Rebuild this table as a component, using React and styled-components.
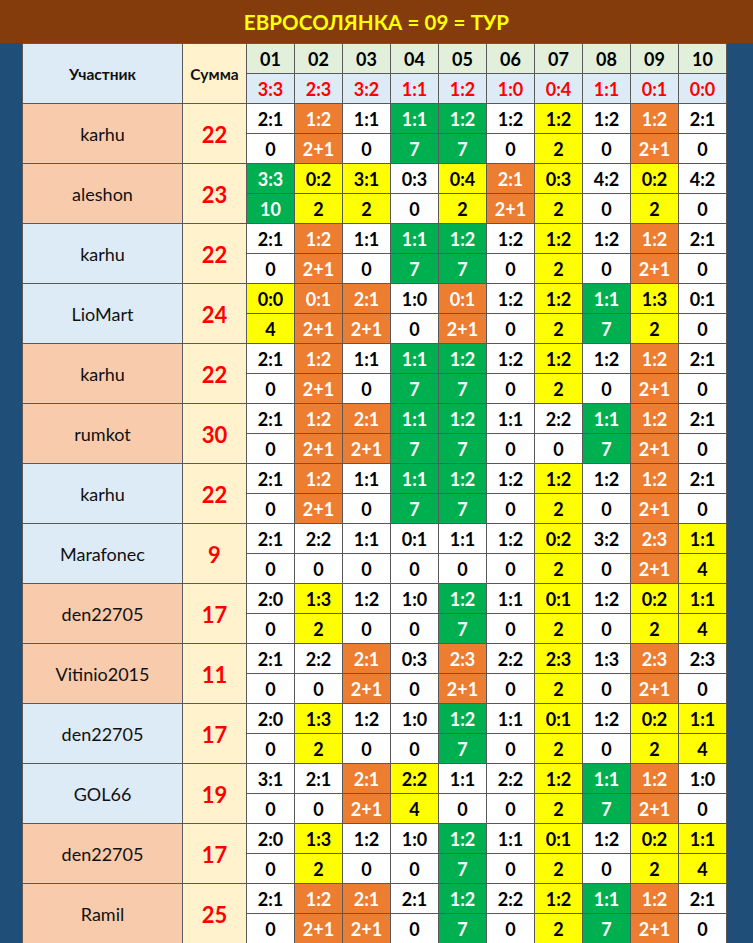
import React from "react";
import styled, { createGlobalStyle } from "styled-components";

const Global = createGlobalStyle`
  html, body { margin: 0; padding: 0; background: #1f4e79; }
  * { box-sizing: border-box; }
`;

const Page = styled.div`
  width: 753px;
  height: 943px;
  overflow: hidden;
  display: flex;
  flex-direction: column;
  background: #1f4e79;
  font-family: Lato, "Open Sans", "Liberation Sans", sans-serif;
`;

const TitleBar = styled.header`
  height: 43px;
  flex: none;
  background: #843c0c;
  display: flex;
  align-items: center;
  justify-content: center;
  color: #ffff00;
  font-weight: 700;
  font-size: 20.5px;
  letter-spacing: 0.1px;
`;

const Body = styled.div`
  display: flex;
  padding-left: 22px;
`;

const Grid = styled.div`
  display: grid;
  grid-template-columns: 159px 63px repeat(10, 47px);
  grid-auto-rows: 29px;
  gap: 1px;
  padding: 1px;
  background: #595959;
  width: 705px;
`;

const HeadLabel = styled.div`
  grid-row: span 2;
  background: ${(p) => p.$bg};
  display: flex;
  align-items: center;
  justify-content: center;
  font-weight: 700;
  font-size: 15.5px;
  color: #111;
`;

const MatchNo = styled.div`
  background: #e2efda;
  display: flex;
  align-items: center;
  justify-content: center;
  font-weight: 700;
  font-size: 18px;
  color: #000;
`;

const Result = styled.div`
  background: #ddebf7;
  display: flex;
  align-items: center;
  justify-content: center;
  font-weight: 700;
  font-size: 18px;
  color: #ff0000;
`;

const Name = styled.div`
  grid-row: span 2;
  background: ${(p) => (p.$blue ? "#ddebf7" : "#f8cbad")};
  display: flex;
  align-items: center;
  justify-content: center;
  font-size: 18px;
  color: #111;
`;

const Sum = styled.div`
  grid-row: span 2;
  background: #fff2cc;
  display: flex;
  align-items: center;
  justify-content: center;
  font-weight: 700;
  font-size: 22px;
  color: #ff0000;
  padding-top: 2px;
`;

const COLORS = {
  w: { bg: "#ffffff", fg: "#000000" },
  o: { bg: "#ed7d31", fg: "#ffffff" },
  g: { bg: "#00b050", fg: "#ffffff" },
  y: { bg: "#ffff00", fg: "#000000" },
};

const Cell = styled.div`
  background: ${(p) => COLORS[p.$c].bg};
  color: ${(p) => COLORS[p.$c].fg};
  display: flex;
  align-items: center;
  justify-content: center;
  font-weight: 700;
  font-size: 18px;
`;

const numbers = ["01", "02", "03", "04", "05", "06", "07", "08", "09", "10"];
const results = ["3:3", "2:3", "3:2", "1:1", "1:2", "1:0", "0:4", "1:1", "0:1", "0:0"];

const karhu = [
  ["2:1", "0", "w"], ["1:2", "2+1", "o"], ["1:1", "0", "w"], ["1:1", "7", "g"], ["1:2", "7", "g"],
  ["1:2", "0", "w"], ["1:2", "2", "y"], ["1:2", "0", "w"], ["1:2", "2+1", "o"], ["2:1", "0", "w"],
];
const den = [
  ["2:0", "0", "w"], ["1:3", "2", "y"], ["1:2", "0", "w"], ["1:0", "0", "w"], ["1:2", "7", "g"],
  ["1:1", "0", "w"], ["0:1", "2", "y"], ["1:2", "0", "w"], ["0:2", "2", "y"], ["1:1", "4", "y"],
];

const players = [
  { name: "karhu", sum: 22, picks: karhu },
  {
    name: "aleshon", sum: 23, picks: [
      ["3:3", "10", "g"], ["0:2", "2", "y"], ["3:1", "2", "y"], ["0:3", "0", "w"], ["0:4", "2", "y"],
      ["2:1", "2+1", "o"], ["0:3", "2", "y"], ["4:2", "0", "w"], ["0:2", "2", "y"], ["4:2", "0", "w"],
    ],
  },
  { name: "karhu", sum: 22, picks: karhu },
  {
    name: "LioMart", sum: 24, picks: [
      ["0:0", "4", "y"], ["0:1", "2+1", "o"], ["2:1", "2+1", "o"], ["1:0", "0", "w"], ["0:1", "2+1", "o"],
      ["1:2", "0", "w"], ["1:2", "2", "y"], ["1:1", "7", "g"], ["1:3", "2", "y"], ["0:1", "0", "w"],
    ],
  },
  { name: "karhu", sum: 22, picks: karhu },
  {
    name: "rumkot", sum: 30, picks: [
      ["2:1", "0", "w"], ["1:2", "2+1", "o"], ["2:1", "2+1", "o"], ["1:1", "7", "g"], ["1:2", "7", "g"],
      ["1:1", "0", "w"], ["2:2", "0", "w"], ["1:1", "7", "g"], ["1:2", "2+1", "o"], ["2:1", "0", "w"],
    ],
  },
  { name: "karhu", sum: 22, picks: karhu },
  {
    name: "Marafonec", sum: 9, picks: [
      ["2:1", "0", "w"], ["2:2", "0", "w"], ["1:1", "0", "w"], ["0:1", "0", "w"], ["1:1", "0", "w"],
      ["1:2", "0", "w"], ["0:2", "2", "y"], ["3:2", "0", "w"], ["2:3", "2+1", "o"], ["1:1", "4", "y"],
    ],
  },
  { name: "den22705", sum: 17, picks: den },
  {
    name: "Vitinio2015", sum: 11, picks: [
      ["2:1", "0", "w"], ["2:2", "0", "w"], ["2:1", "2+1", "o"], ["0:3", "0", "w"], ["2:3", "2+1", "o"],
      ["2:2", "0", "w"], ["2:3", "2", "y"], ["1:3", "0", "w"], ["2:3", "2+1", "o"], ["2:3", "0", "w"],
    ],
  },
  { name: "den22705", sum: 17, picks: den },
  {
    name: "GOL66", sum: 19, picks: [
      ["3:1", "0", "w"], ["2:1", "0", "w"], ["2:1", "2+1", "o"], ["2:2", "4", "y"], ["1:1", "0", "w"],
      ["2:2", "0", "w"], ["1:2", "2", "y"], ["1:1", "7", "g"], ["1:2", "2+1", "o"], ["1:0", "0", "w"],
    ],
  },
  { name: "den22705", sum: 17, picks: den },
  {
    name: "Ramil", sum: 25, picks: [
      ["2:1", "0", "w"], ["1:2", "2+1", "o"], ["2:1", "2+1", "o"], ["2:1", "0", "w"], ["1:2", "7", "g"],
      ["2:2", "0", "w"], ["1:2", "2", "y"], ["1:1", "7", "g"], ["1:2", "2+1", "o"], ["2:1", "0", "w"],
    ],
  },
];

const blueRow = (i) => Math.floor(i / 2) % 2 === 1;

export default function App() {
  return (
    <Page>
      <Global />
      <TitleBar>ЕВРОСОЛЯНКА = 09 = ТУР</TitleBar>
      <Body>
        <Grid>
          <HeadLabel $bg="#ddebf7">Участник</HeadLabel>
          <HeadLabel $bg="#fff2cc">Сумма</HeadLabel>
          {numbers.map((n) => (
            <MatchNo key={"n" + n}>{n}</MatchNo>
          ))}
          {results.map((r, i) => (
            <Result key={"r" + i}>{r}</Result>
          ))}
          {players.map((p, i) => (
            <React.Fragment key={i}>
              <Name $blue={blueRow(i)}>{p.name}</Name>
              <Sum>{p.sum}</Sum>
              {p.picks.map((c, j) => (
                <Cell key={"t" + j} $c={c[2]}>{c[0]}</Cell>
              ))}
              {p.picks.map((c, j) => (
                <Cell key={"b" + j} $c={c[2]}>{c[1]}</Cell>
              ))}
            </React.Fragment>
          ))}
        </Grid>
      </Body>
    </Page>
  );
}
